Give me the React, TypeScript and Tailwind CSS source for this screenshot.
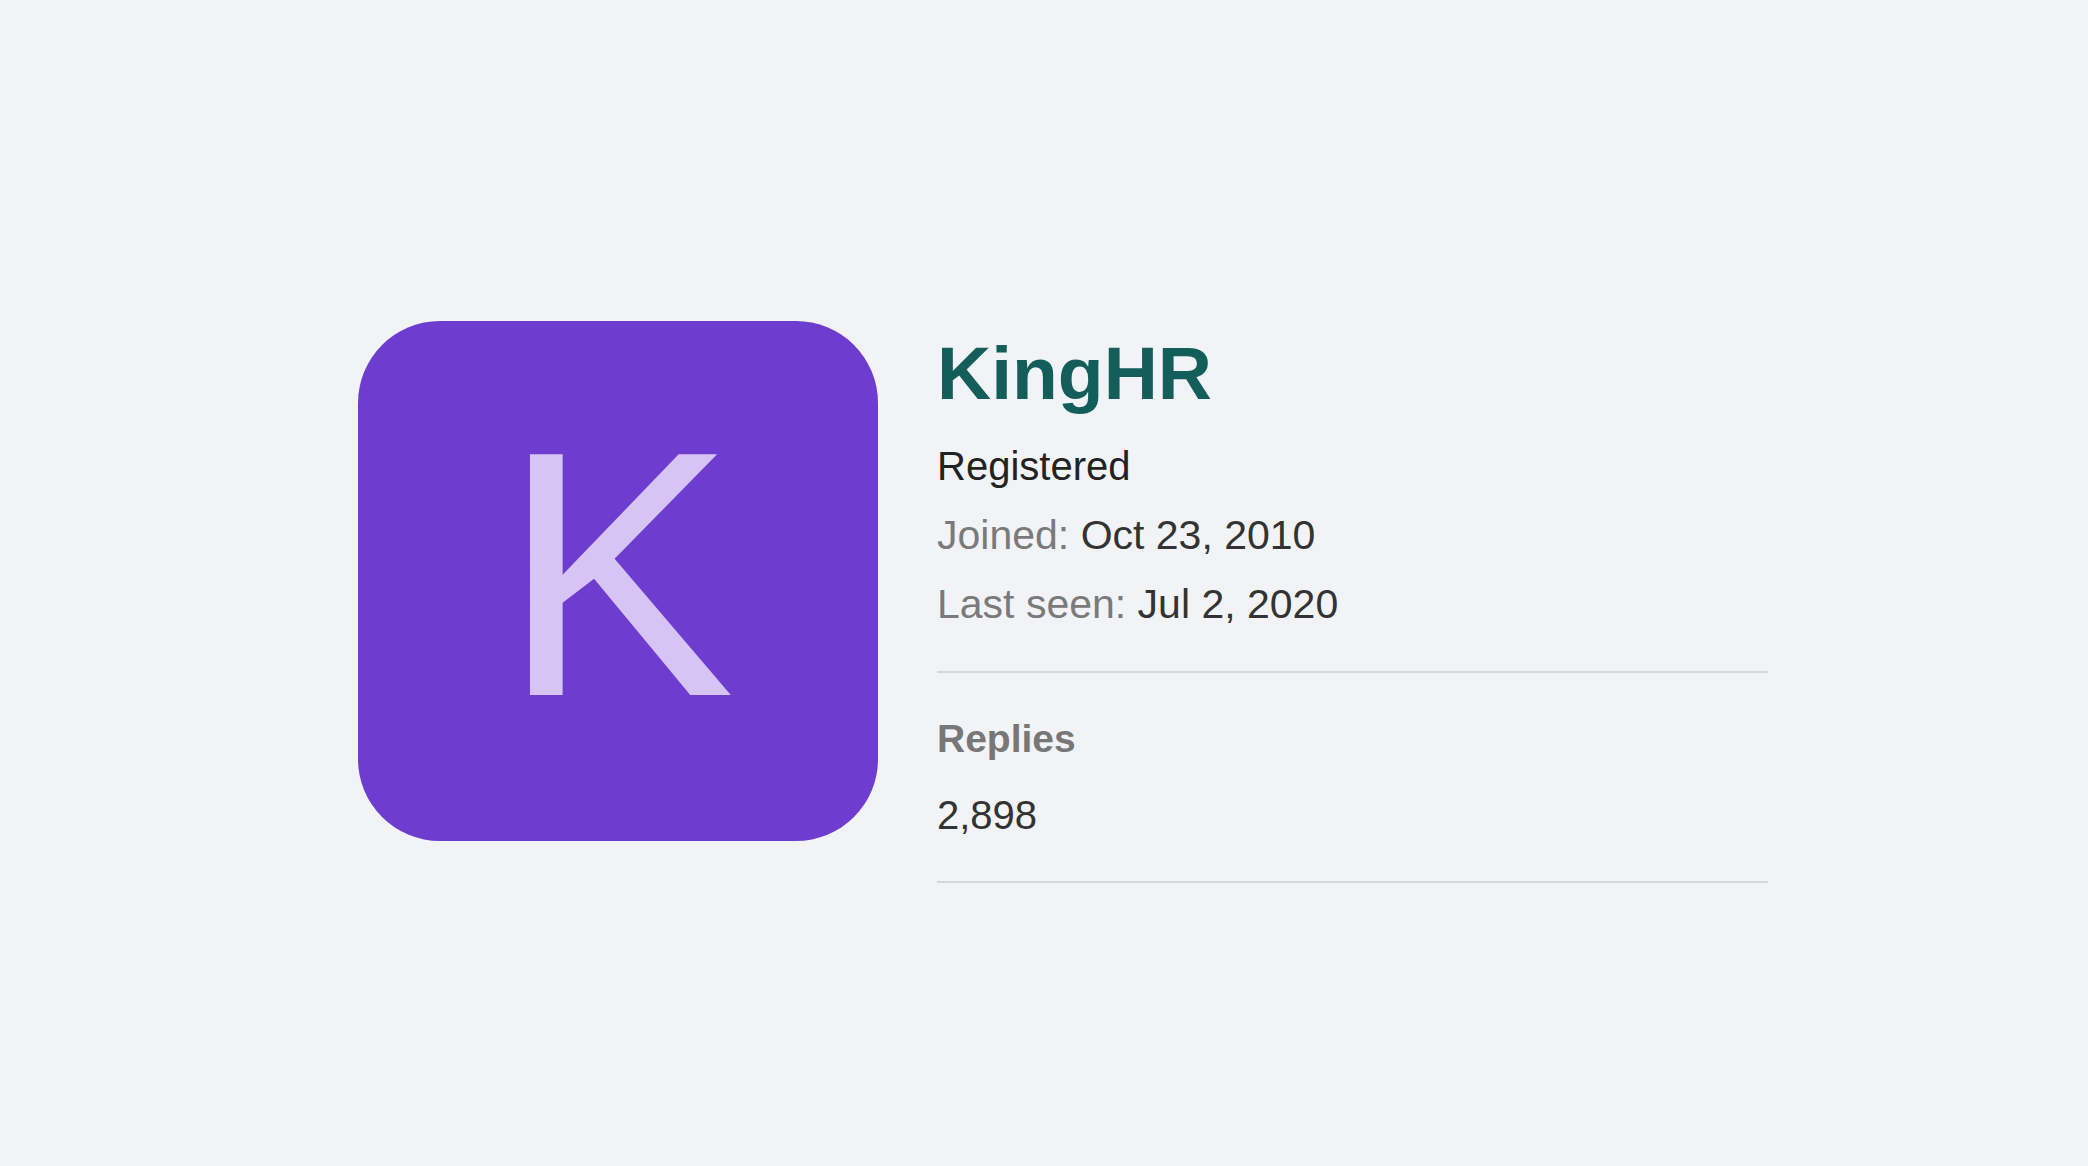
export default function App() {
  return (
    <div
      className="min-h-screen w-full bg-[#f2f3f6] pl-[358px] pt-[321px]"
      style={{ fontFamily: '"Liberation Sans", Arial, sans-serif' }}
    >
      <div className="flex items-start gap-[59px]">
        <div className="flex h-[520px] w-[520px] shrink-0 items-center justify-center rounded-[82px] bg-[#6e3ccf] pb-[14px]">
          <span className="text-[350px] leading-none text-[#d6c5f4]">K</span>
        </div>

        <div className="w-[831px]">
          <h1 className="mt-[7px] text-[75px] font-bold leading-[90px] text-[#135e5b]">KingHR</h1>
          <div className="mt-[14px] text-[40px] leading-[69px] text-[#222]">
            <div>Registered</div>
            <div className="text-[41px]">
              <span className="text-[#7a7a7a]">Joined:</span> <span className="text-[#333]">Oct 23, 2010</span>
            </div>
            <div className="text-[41px]">
              <span className="text-[#7a7a7a]">Last seen:</span> <span className="text-[#333]">Jul 2, 2020</span>
            </div>
          </div>

          <div className="mt-[32px] border-t-2 border-b-2 border-[#d5d6d9] pt-[31px] pb-[31px]">
            <div className="text-[39px] font-bold leading-[69px] text-[#777]">Replies</div>
            <div className="mt-[8px] text-[40px] leading-[69px] text-[#333]">2,898</div>
          </div>
        </div>
      </div>
    </div>
  )
}
